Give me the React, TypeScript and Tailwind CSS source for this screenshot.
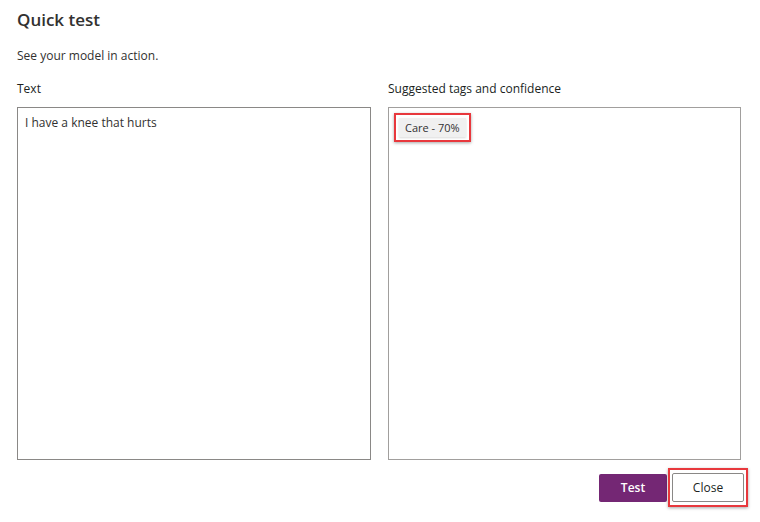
export default function App() {
  return (
    <div className="w-[760px] h-[522px] bg-white text-[#323130] font-['Open_Sans','Noto_Sans',sans-serif]">
      <div className="pl-[17px] pt-[8px]">
        <h1 className="text-[17px] leading-[24px] font-semibold text-[#323130]">Quick test</h1>
        <p className="mt-[16px] text-[12px] leading-[16px]">See your model in action.</p>

        <div className="mt-[17px] flex gap-[17px] w-[724px]">
          <div className="w-[354px] flex flex-col">
            <label className="text-[12px] leading-[16px] font-medium text-[#201f1e]">Text</label>
            <div className="mt-[10px] h-[353px] border border-[#8a8886] px-[7px] pt-[7px] text-[12px] leading-[16px]">
              I have a knee that hurts
            </div>
          </div>
          <div className="w-[353px] flex flex-col">
            <label className="text-[12px] leading-[16px] font-medium text-[#201f1e]">Suggested tags and confidence</label>
            <div className="mt-[10px] h-[353px] border border-[#a19f9d] px-[5px] pt-[5px]">
              <div className="inline-flex border-2 border-[#e8383d] px-[3px] py-[3px] shadow-[0_1px_3px_rgba(0,0,0,0.35)]">
                <span className="bg-[#f0f0f0] px-[6px] py-[1px] text-[11px] leading-[17px] shadow-[0_1px_2px_rgba(0,0,0,0.15)]">
                  Care - 70%
                </span>
              </div>
            </div>
          </div>
        </div>

        <div className="mt-[8px] flex justify-end items-center gap-[1px] w-[731px]">
          <button className="w-[68px] h-[28px] rounded-[2px] bg-[#742774] text-white text-[12px] font-semibold">
            Test
          </button>
          <div className="border-2 border-[#e8383d] px-[2px] py-[3px] shadow-[0_1px_3px_rgba(0,0,0,0.35)]">
            <button className="w-[72px] h-[29px] rounded-[2px] border border-[#8a8886] bg-white text-[12px] font-medium text-[#201f1e]">
              Close
            </button>
          </div>
        </div>
      </div>
    </div>
  );
}
